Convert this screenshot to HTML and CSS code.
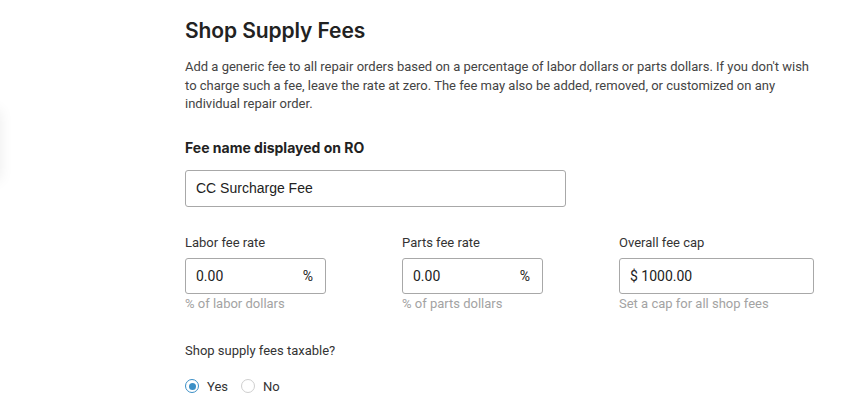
FILE: index.html
```html
<!DOCTYPE html>
<html lang="en">
<head>
<meta charset="utf-8">
<title>Shop Supply Fees</title>
<link rel="stylesheet" href="styles.css">
</head>
<body>
<div class="edge-shadow"></div>
<main class="page">
  <h1 class="title">Shop Supply Fees</h1>
  <p class="desc">Add a generic fee to all repair orders based on a percentage of labor dollars or parts dollars. If you don't wish to charge such a fee, leave the rate at zero. The fee may also be added, removed, or customized on any individual repair order.</p>

  <div class="fee-name">
    <div class="section-label">Fee name displayed on RO</div>
    <div class="input input-wide"><span class="value name-value">CC Surcharge Fee</span></div>
  </div>

  <div class="rates">
    <div class="field">
      <div class="field-label">Labor fee rate</div>
      <div class="input input-rate"><span class="value">0.00</span><span class="suffix">%</span></div>
      <div class="help">% of labor dollars</div>
    </div>
    <div class="field">
      <div class="field-label">Parts fee rate</div>
      <div class="input input-rate"><span class="value">0.00</span><span class="suffix">%</span></div>
      <div class="help">% of parts dollars</div>
    </div>
    <div class="field">
      <div class="field-label">Overall fee cap</div>
      <div class="input input-cap"><span class="value">$ 1000.00</span></div>
      <div class="help">Set a cap for all shop fees</div>
    </div>
  </div>

  <div class="taxable">
    <div class="field-label">Shop supply fees taxable?</div>
    <div class="radios">
      <label class="radio"><span class="dot checked"></span><span class="radio-text">Yes</span></label>
      <label class="radio"><span class="dot"></span><span class="radio-text">No</span></label>
    </div>
  </div>
</main>
</body>
</html>
```
FILE: styles.css
```css
html, body {
  margin: 0;
  padding: 0;
  background: #ffffff;
}
body {
  font-family: Roboto, "Liberation Sans", sans-serif;
  color: #333333;
  position: relative;
  width: 847px;
  height: 416px;
  overflow: hidden;
}
.edge-shadow {
  position: absolute;
  left: -20px;
  top: 110px;
  width: 20px;
  height: 70px;
  box-shadow: 0 0 14px rgba(0,0,0,0.08);
  background: #fff;
}
.page {
  padding: 17px 0 0 185px;
}
.title {
  margin: 0;
  font-family: Inter, "Liberation Sans", sans-serif;
  font-weight: 600;
  font-size: 21px;
  line-height: 28px;
  color: #222222;
  letter-spacing: -0.1px;
}
.desc {
  margin: 13px 0 0 0;
  width: 628px;
  font-size: 13px;
  line-height: 18.5px;
  color: #444444;
}
.fee-name {
  margin-top: 25px;
}
.section-label {
  font-family: Inter, "Liberation Sans", sans-serif;
  font-weight: 700;
  font-size: 14px;
  line-height: 18px;
  color: #222222;
}
.input {
  box-sizing: border-box;
  border: 1px solid #a8a8a8;
  border-radius: 3px;
  display: flex;
  align-items: center;
  justify-content: space-between;
  padding: 0 10px;
  background: #fff;
  font-size: 14px;
  color: #222222;
}
.input-wide {
  margin-top: 13px;
  width: 381px;
  height: 37px;
}
.name-value {
  font-family: "Liberation Sans", Arial, sans-serif;
}
.rates {
  margin-top: 27px;
  display: grid;
  grid-template-columns: 217px 217px 217px;
}
.field-label {
  font-size: 13px;
  line-height: 18px;
  color: #333333;
}
.input-rate {
  margin-top: 6px;
  width: 141px;
  height: 36px;
}
.input-cap {
  margin-top: 6px;
  width: 195px;
  height: 36px;
}
.suffix {
  margin-right: 2px;
}
.help {
  margin-top: 1px;
  font-size: 13px;
  line-height: 17px;
  color: #a3a3a3;
}
.taxable {
  margin-top: 30px;
}
.radios {
  margin-top: 19px;
  display: flex;
  gap: 13px;
}
.radio {
  display: flex;
  align-items: center;
  font-size: 13px;
  color: #333333;
}
.dot {
  box-sizing: border-box;
  width: 14px;
  height: 14px;
  border-radius: 50%;
  border: 1px solid #cfcfcf;
  margin-right: 8px;
  background: #fff;
  position: relative;
}
.dot.checked {
  border: 1.5px solid #3b8fc6;
}
.dot.checked::after {
  content: "";
  position: absolute;
  left: 50%;
  top: 50%;
  width: 7px;
  height: 7px;
  margin: -3.5px 0 0 -3.5px;
  border-radius: 50%;
  background: #3b8fc6;
}
```
